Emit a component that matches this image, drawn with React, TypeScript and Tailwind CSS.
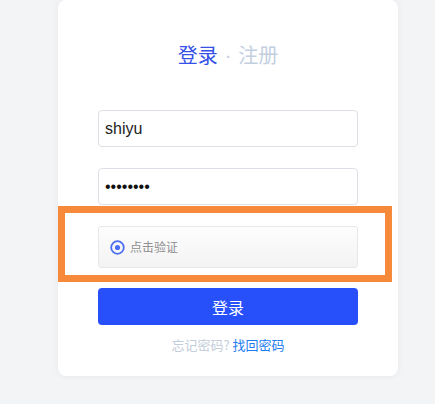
import React from "react";

export default function App() {
  return (
    <div className="relative w-[435px] h-[404px] bg-[#f3f4f6] overflow-hidden pl-[58px] font-['Liberation_Sans',Arial,'Noto_Sans_CJK_SC',sans-serif]">
      <div className="w-[340px] h-[376px] bg-white rounded-lg shadow-[0_0_6px_rgba(0,0,0,0.06)] px-10 pt-[43px] flex flex-col">
        <div className="h-6 flex items-center justify-center text-[20px] leading-6 font-['Noto_Sans_CJK_SC',sans-serif]">
          <span className="text-[#3550e6]">登录</span>
          <span className="text-[#c3cfdf] px-[7px] font-['Liberation_Sans',Arial,sans-serif]">·</span>
          <span className="text-[#c3cfdf]">注册</span>
        </div>
        <input
          readOnly
          value="shiyu"
          className="mt-[43px] h-[37px] w-full border border-[#dcdfe6] rounded-[4px] px-[6px] text-[16px] text-[#222] outline-none font-['Liberation_Sans',Arial,sans-serif]"
        />
        <input
          readOnly
          type="password"
          value="12345678"
          className="mt-[21px] h-[37px] w-full border border-[#dcdfe6] rounded-[4px] px-[6px] text-[16px] text-[#111] outline-none font-['Liberation_Sans',Arial,sans-serif]"
        />
        <div className="mt-[21px] h-[42px] w-full border border-[#e6e8ec] rounded-[3px] bg-gradient-to-b from-[#fdfdfd] to-[#f3f3f3] flex items-center pl-[11px]">
          <svg width="15" height="15" viewBox="0 0 15 15">
            <circle cx="7.5" cy="7.5" r="6.3" fill="none" stroke="#4e6ef2" strokeWidth="1.8" />
            <circle cx="7.5" cy="7.5" r="2.6" fill="#4e6ef2" />
          </svg>
          <span className="ml-[5px] text-[12px] text-[#8f8f8f] font-['Noto_Sans_CJK_SC',sans-serif]">点击验证</span>
        </div>
        <button className="mt-[20px] h-[37px] w-full rounded-[4px] bg-[#2750fb] text-white text-[16px] flex items-center justify-center font-['Noto_Sans_CJK_SC',sans-serif]">
          登录
        </button>
        <div className="mt-[11px] h-[18px] leading-[18px] text-center text-[13px] font-['Noto_Sans_CJK_SC',sans-serif]">
          <span className="text-[#c3cddb]">忘记密码? </span>
          <span className="text-[#1c7cf0]">找回密码</span>
        </div>
      </div>
      <div className="absolute left-[58px] top-[206px] w-[334px] h-[76px] border-[7px] border-[#f7893b] pointer-events-none" />
    </div>
  );
}
